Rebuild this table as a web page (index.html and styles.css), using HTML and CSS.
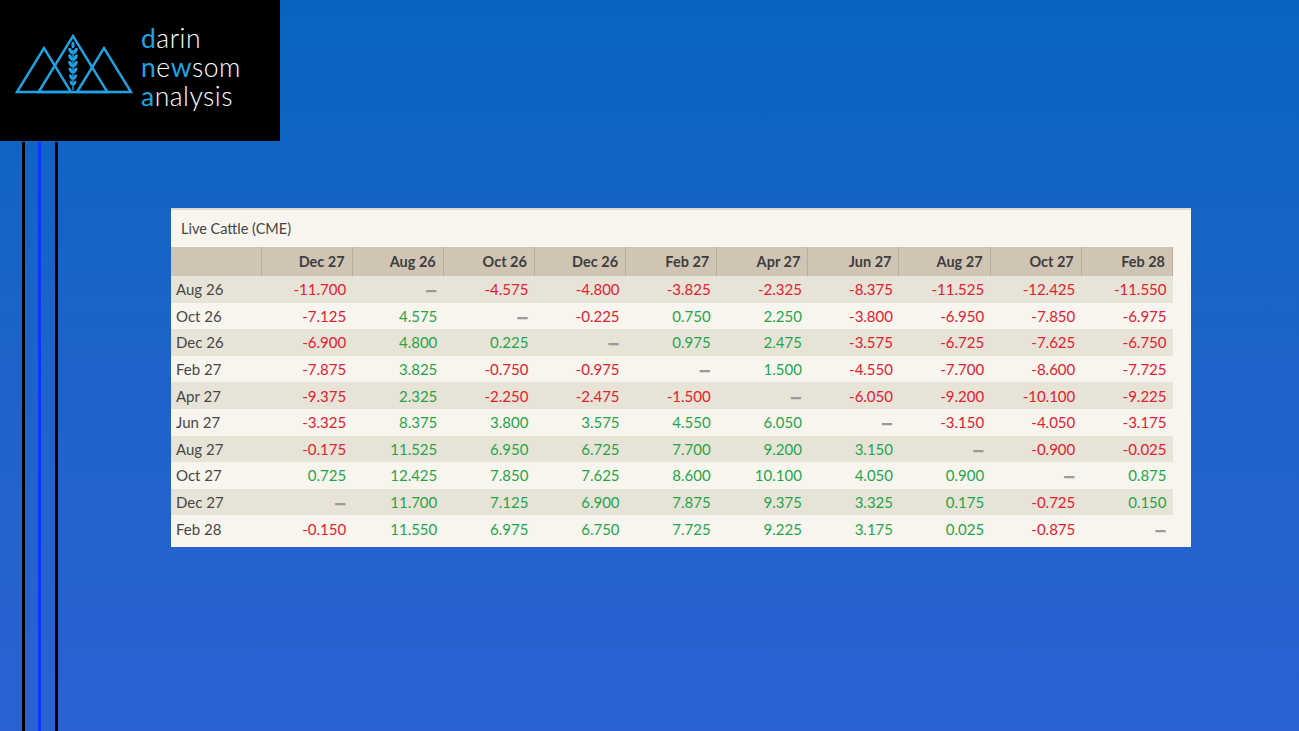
FILE: index.html
```html
<!DOCTYPE html>
<html lang="en">
<head>
<meta charset="utf-8">
<title>Live Cattle (CME) spreads</title>
<link rel="stylesheet" href="styles.css">
</head>
<body>
<div class="page">
  <header class="logo">
    <svg class="logo-mark" viewBox="0 0 140 141" width="140" height="141" aria-hidden="true">
      <g fill="none" stroke="#1ea4e6" stroke-width="2.4" stroke-linejoin="miter">
        <polygon points="17,92 44,48 71,92"/>
        <polygon points="38.6,92 73,36 107.4,92"/>
        <polygon points="77,92 104,48 131,92"/>
      </g>
      <g fill="#1ea4e6">
        <rect x="72.3" y="50" width="1.4" height="40"/>
        <ellipse cx="73" cy="45" rx="1.6" ry="3.2"/>
        <ellipse cx="70.6" cy="51" rx="1.7" ry="3.4" transform="rotate(-30 70.6 51)"/>
        <ellipse cx="75.4" cy="51" rx="1.7" ry="3.4" transform="rotate(30 75.4 51)"/>
        <ellipse cx="70.6" cy="57.5" rx="1.7" ry="3.4" transform="rotate(-30 70.6 57.5)"/>
        <ellipse cx="75.4" cy="57.5" rx="1.7" ry="3.4" transform="rotate(30 75.4 57.5)"/>
        <ellipse cx="70.6" cy="64" rx="1.7" ry="3.4" transform="rotate(-30 70.6 64)"/>
        <ellipse cx="75.4" cy="64" rx="1.7" ry="3.4" transform="rotate(30 75.4 64)"/>
        <ellipse cx="70.8" cy="70.5" rx="1.6" ry="3.2" transform="rotate(-30 70.8 70.5)"/>
        <ellipse cx="75.2" cy="70.5" rx="1.6" ry="3.2" transform="rotate(30 75.2 70.5)"/>
        <ellipse cx="71" cy="77" rx="1.5" ry="3" transform="rotate(-30 71 77)"/>
        <ellipse cx="75" cy="77" rx="1.5" ry="3" transform="rotate(30 75 77)"/>
        <ellipse cx="71.3" cy="83" rx="1.3" ry="2.6" transform="rotate(-30 71.3 83)"/>
        <ellipse cx="74.7" cy="83" rx="1.3" ry="2.6" transform="rotate(30 74.7 83)"/>
      </g>
    </svg>
    <div class="logo-text">
      <div><span class="accent">d</span>arin</div>
      <div><span class="accent">n</span>e<span class="accent">w</span>som</div>
      <div><span class="accent">a</span>nalysis</div>
    </div>
  </header>
  <div class="stage">
    <div class="rules">
      <span class="rule rule-dark"></span>
      <span class="rule rule-blue"></span>
      <span class="rule rule-dark"></span>
    </div>
    <section class="card">
      <div class="card-title">Live Cattle (CME)</div>
      <table class="grid">
        <colgroup><col class="col-label"><col><col><col><col><col><col><col><col><col><col></colgroup>
        <thead>
          <tr><th></th><th>Dec 27</th><th>Aug 26</th><th>Oct 26</th><th>Dec 26</th><th>Feb 27</th><th>Apr 27</th><th>Jun 27</th><th>Aug 27</th><th>Oct 27</th><th>Feb 28</th></tr>
        </thead>
        <tbody>
          <tr><td>Aug 26</td><td class="neg">-11.700</td><td class="nil">—</td><td class="neg">-4.575</td><td class="neg">-4.800</td><td class="neg">-3.825</td><td class="neg">-2.325</td><td class="neg">-8.375</td><td class="neg">-11.525</td><td class="neg">-12.425</td><td class="neg">-11.550</td></tr>
          <tr><td>Oct 26</td><td class="neg">-7.125</td><td class="pos">4.575</td><td class="nil">—</td><td class="neg">-0.225</td><td class="pos">0.750</td><td class="pos">2.250</td><td class="neg">-3.800</td><td class="neg">-6.950</td><td class="neg">-7.850</td><td class="neg">-6.975</td></tr>
          <tr><td>Dec 26</td><td class="neg">-6.900</td><td class="pos">4.800</td><td class="pos">0.225</td><td class="nil">—</td><td class="pos">0.975</td><td class="pos">2.475</td><td class="neg">-3.575</td><td class="neg">-6.725</td><td class="neg">-7.625</td><td class="neg">-6.750</td></tr>
          <tr><td>Feb 27</td><td class="neg">-7.875</td><td class="pos">3.825</td><td class="neg">-0.750</td><td class="neg">-0.975</td><td class="nil">—</td><td class="pos">1.500</td><td class="neg">-4.550</td><td class="neg">-7.700</td><td class="neg">-8.600</td><td class="neg">-7.725</td></tr>
          <tr><td>Apr 27</td><td class="neg">-9.375</td><td class="pos">2.325</td><td class="neg">-2.250</td><td class="neg">-2.475</td><td class="neg">-1.500</td><td class="nil">—</td><td class="neg">-6.050</td><td class="neg">-9.200</td><td class="neg">-10.100</td><td class="neg">-9.225</td></tr>
          <tr><td>Jun 27</td><td class="neg">-3.325</td><td class="pos">8.375</td><td class="pos">3.800</td><td class="pos">3.575</td><td class="pos">4.550</td><td class="pos">6.050</td><td class="nil">—</td><td class="neg">-3.150</td><td class="neg">-4.050</td><td class="neg">-3.175</td></tr>
          <tr><td>Aug 27</td><td class="neg">-0.175</td><td class="pos">11.525</td><td class="pos">6.950</td><td class="pos">6.725</td><td class="pos">7.700</td><td class="pos">9.200</td><td class="pos">3.150</td><td class="nil">—</td><td class="neg">-0.900</td><td class="neg">-0.025</td></tr>
          <tr><td>Oct 27</td><td class="pos">0.725</td><td class="pos">12.425</td><td class="pos">7.850</td><td class="pos">7.625</td><td class="pos">8.600</td><td class="pos">10.100</td><td class="pos">4.050</td><td class="pos">0.900</td><td class="nil">—</td><td class="pos">0.875</td></tr>
          <tr><td>Dec 27</td><td class="nil">—</td><td class="pos">11.700</td><td class="pos">7.125</td><td class="pos">6.900</td><td class="pos">7.875</td><td class="pos">9.375</td><td class="pos">3.325</td><td class="pos">0.175</td><td class="neg">-0.725</td><td class="pos">0.150</td></tr>
          <tr><td>Feb 28</td><td class="neg">-0.150</td><td class="pos">11.550</td><td class="pos">6.975</td><td class="pos">6.750</td><td class="pos">7.725</td><td class="pos">9.225</td><td class="pos">3.175</td><td class="pos">0.025</td><td class="neg">-0.875</td><td class="nil">—</td></tr>
        </tbody>
      </table>
    </section>
  </div>
</div>
</body>
</html>
```

FILE: styles.css
```css
* { box-sizing: border-box; }

html, body {
  margin: 0;
  padding: 0;
  height: 100%;
}

body {
  background: linear-gradient(180deg, #0864c0 0%, #1c63c8 45%, #2a62d2 100%);
  font-family: Lato, "Liberation Sans", sans-serif;
  overflow: hidden;
}

.page {
  width: 1299px;
  height: 731px;
  display: flex;
  flex-direction: column;
}

.logo {
  width: 280px;
  height: 141px;
  background: #000;
  display: flex;
  align-items: flex-start;
  flex: none;
}

.logo-mark {
  display: block;
  flex: none;
}

.logo-text {
  padding-top: 24px;
  padding-left: 1px;
  color: #fff;
  font-family: Lato, "Open Sans", sans-serif;
  font-weight: 300;
  font-size: 26.5px;
  line-height: 29px;
  letter-spacing: 0.5px;
}

.accent {
  color: #1ea4e6;
  font-weight: 400;
}

.stage {
  flex: 1;
  display: flex;
  align-items: flex-start;
  padding-top: 1px;
}

.rules {
  display: flex;
  align-self: stretch;
  margin-left: 22px;
  gap: 13px;
}

.rule {
  width: 3px;
  display: block;
}

.rule + .rule + .rule { margin-left: 1px; }

.rule-dark { background: #000; }
.rule-blue { background: #0a34ff; }

.card {
  margin-left: 113px;
  margin-top: 66px;
  width: 1020px;
  background: #f8f5ef;
  border-top: 2px solid #dedad3;
  padding: 0 18px 5px 0;
}

.card-title {
  height: 37px;
  line-height: 37px;
  padding-left: 10px;
  font-size: 14.5px;
  color: #444;
}

.grid {
  width: 1002px;
  border-collapse: collapse;
  table-layout: fixed;
  font-size: 15px;
}

.col-label { width: 90px; }

.grid th {
  height: 29px;
  background: #d0c5b5;
  border-right: 1px solid #b8ad9d;
  text-align: right;
  padding: 0 7px 0 0;
  font-weight: 700;
  font-size: 14.5px;
  color: #3e3e3e;
}

.grid td {
  height: 26.6px;
  padding: 0 6px 0 0;
  text-align: right;
  white-space: nowrap;
}

.grid td:first-child {
  text-align: left;
  padding: 0 0 0 5px;
  color: #474747;
}

.grid tbody tr:nth-child(odd) { background: #e8e3d7; }

.neg { color: #e3202f; }
.pos { color: #1fa64a; }
.nil {
  color: #9a9a9a;
  font-weight: 700;
  text-shadow: 0 1px 0 #9a9a9a;
}
```
